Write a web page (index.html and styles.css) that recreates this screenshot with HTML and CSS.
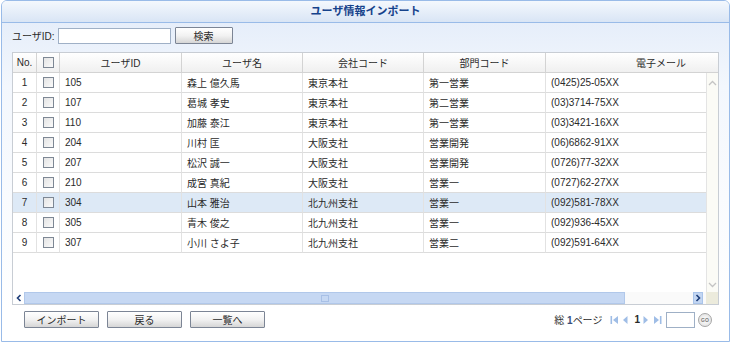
FILE: index.html
```html
<!DOCTYPE html>
<html lang="ja">
<head>
    <meta charset="UTF-8">
    <title>ユーザ情報インポート</title>
    <link rel="stylesheet" href="styles.css">
</head>
<body>

<div class="panel">
    <div class="panel-title">ユーザ情報インポート</div>
    <div class="panel-body">
        <!-- Search -->
        <div class="search-bar">
            <label for="userId">ユーザID:</label>
            <input type="text" id="userId" class="text-input">
            <button type="button" class="btn btn-search">検索</button>
        </div>

        <!-- Grid -->
        <div class="grid">
            <div class="grid-header">
                <table class="grid-table">
                    <colgroup>
                        <col class="c-no"><col class="c-chk"><col class="c-id"><col class="c-name">
                        <col class="c-comp"><col class="c-dept"><col class="c-mail">
                    </colgroup>
                    <tr>
                        <th>No.</th>
                        <th><span class="chk"></span></th>
                        <th>ユーザID</th>
                        <th>ユーザ名</th>
                        <th>会社コード</th>
                        <th>部門コード</th>
                        <th>電子メール</th>
                    </tr>
                </table>
            </div>
            <div class="grid-main">
                <div class="grid-rows">
                    <table class="grid-table">
                        <colgroup>
                            <col class="c-no"><col class="c-chk"><col class="c-id"><col class="c-name">
                            <col class="c-comp"><col class="c-dept"><col class="c-mail">
                        </colgroup>
                        <tr><td class="num">1</td><td class="cb"><span class="chk"></span></td><td>105</td><td>森上 億久馬</td><td>東京本社</td><td>第一営業</td><td>(0425)25-05XX</td></tr>
                        <tr><td class="num">2</td><td class="cb"><span class="chk"></span></td><td>107</td><td>葛城 孝史</td><td>東京本社</td><td>第二営業</td><td>(03)3714-75XX</td></tr>
                        <tr><td class="num">3</td><td class="cb"><span class="chk"></span></td><td>110</td><td>加藤 泰江</td><td>東京本社</td><td>第一営業</td><td>(03)3421-16XX</td></tr>
                        <tr><td class="num">4</td><td class="cb"><span class="chk"></span></td><td>204</td><td>川村 匡</td><td>大阪支社</td><td>営業開発</td><td>(06)6862-91XX</td></tr>
                        <tr><td class="num">5</td><td class="cb"><span class="chk"></span></td><td>207</td><td>松沢 誠一</td><td>大阪支社</td><td>営業開発</td><td>(0726)77-32XX</td></tr>
                        <tr><td class="num">6</td><td class="cb"><span class="chk"></span></td><td>210</td><td>成宮 真紀</td><td>大阪支社</td><td>営業一</td><td>(0727)62-27XX</td></tr>
                        <tr class="selected"><td class="num">7</td><td class="cb"><span class="chk"></span></td><td>304</td><td>山本 雅治</td><td>北九州支社</td><td>営業一</td><td>(092)581-78XX</td></tr>
                        <tr><td class="num">8</td><td class="cb"><span class="chk"></span></td><td>305</td><td>青木 俊之</td><td>北九州支社</td><td>営業一</td><td>(092)936-45XX</td></tr>
                        <tr><td class="num">9</td><td class="cb"><span class="chk"></span></td><td>307</td><td>小川 さよ子</td><td>北九州支社</td><td>営業二</td><td>(092)591-64XX</td></tr>
                    </table>
                </div>
                <div class="vscroll">
                    <span class="sb-arrow">
                        <svg width="9" height="6" viewBox="0 0 9 6"><path d="M1 5 L4.5 1.5 L8 5" fill="none" stroke="#c4c4c4" stroke-width="1.3"/></svg>
                    </span>
                    <span class="sb-arrow">
                        <svg width="9" height="6" viewBox="0 0 9 6"><path d="M1 1 L4.5 4.5 L8 1" fill="none" stroke="#c4c4c4" stroke-width="1.3"/></svg>
                    </span>
                </div>
            </div>
            <div class="grid-foot">
                <div class="hscroll">
                    <span class="sb-left">
                        <svg width="6" height="8" viewBox="0 0 6 8"><path d="M4.5 1 L1.5 4 L4.5 7" fill="none" stroke="#1f3f7a" stroke-width="1.6"/></svg>
                    </span>
                    <span class="sb-thumb"><span class="grip"></span></span>
                    <span class="sb-track"></span>
                    <span class="sb-right">
                        <svg width="6" height="8" viewBox="0 0 6 8"><path d="M1.5 1 L4.5 4 L1.5 7" fill="none" stroke="#1f3f7a" stroke-width="1.6"/></svg>
                    </span>
                </div>
                <div class="corner"></div>
            </div>
        </div>

        <!-- Buttons and paging -->
        <div class="bottom-bar">
            <div class="button-group">
                <button type="button" class="btn">インポート</button>
                <button type="button" class="btn">戻る</button>
                <button type="button" class="btn">一覧へ</button>
            </div>
            <div class="pager">
                <span class="pager-total">総 <b>1</b>ページ</span>
                <svg class="pg-icon" width="9" height="10" viewBox="0 0 9 10"><rect x="0.5" y="1" width="1.6" height="8" fill="#9fbde6"/><path d="M8 1 L3 5 L8 9 Z" fill="#9fbde6"/></svg>
                <svg class="pg-icon" width="6" height="10" viewBox="0 0 6 10"><path d="M5.5 1 L1 5 L5.5 9 Z" fill="#9fbde6"/></svg>
                <b class="pg-num">1</b>
                <svg class="pg-icon next" width="6" height="10" viewBox="0 0 6 10"><path d="M0.5 1 L5 5 L0.5 9 Z" fill="#9fbde6"/></svg>
                <svg class="pg-icon" width="9" height="10" viewBox="0 0 9 10"><path d="M1 1 L6 5 L1 9 Z" fill="#9fbde6"/><rect x="6.9" y="1" width="1.6" height="8" fill="#9fbde6"/></svg>
                <input type="text" class="page-input">
                <span class="go-btn">GO</span>
            </div>
        </div>
    </div>
</div>

</body>
</html>
```

FILE: styles.css
```css
body {
    margin: 0;
    font-family: "Liberation Sans", "Noto Sans CJK JP", sans-serif;
    font-size: 10px;
    color: #2a2a2a;
    background: #fff;
}
.panel {
    width: 727px;
    height: 340px;
    margin-left: 1px;
    border: 1px solid #99bbe8;
    border-radius: 6px 6px 0 0;
    overflow: hidden;
}
.panel-title {
    height: 21px;
    line-height: 21px;
    text-align: center;
    font-size: 11px;
    font-weight: bold;
    color: #15428b;
    background: linear-gradient(#f4f8fd, #d9e5f5);
    border-bottom: 1px solid #99bbe8;
}
.panel-body {
    height: 318px;
    padding: 0 10px;
    background: linear-gradient(#e6eefa, #f3f7fd 20%, #ffffff 90%);
}
.search-bar {
    display: flex;
    align-items: center;
    height: 17px;
    padding-top: 4px;
}
.search-bar label {
    margin-right: 3px;
}
.text-input {
    width: 113px;
    height: 16px;
    margin: 0;
    padding: 0 2px;
    border: 1px solid #9fb0c6;
    box-sizing: border-box;
    background: #fff;
}
.btn {
    height: 17px;
    padding: 0;
    margin: 0;
    font-family: inherit;
    font-size: 10px;
    color: #2a2a2a;
    border: 1px solid #7c8595;
    border-radius: 1px;
    background: linear-gradient(#ffffff, #f2f2f2 50%, #d6d6d6);
    box-sizing: border-box;
}
.btn-search {
    width: 58px;
    margin-left: 4px;
}

/* grid */
.grid {
    margin-top: 8px;
    border: 1px solid #c8cdd4;
    background: #fff;
}
.grid-header {
    height: 20px;
    overflow: hidden;
}
.grid-table {
    table-layout: fixed;
    border-collapse: separate;
    border-spacing: 0;
    width: 764px;
}
.c-no { width: 24px; }
.c-chk { width: 23px; }
.c-id { width: 122px; }
.c-name { width: 121px; }
.c-comp { width: 121px; }
.c-dept { width: 122px; }
.c-mail { width: 231px; }
.grid-table th {
    height: 19px;
    padding: 0;
    font-weight: normal;
    text-align: center;
    background: linear-gradient(#ffffff, #f0f0f0);
    border-right: 1px solid #d3d3d3;
    border-bottom: 1px solid #d3d3d3;
}
.grid-table td {
    height: 19px;
    padding: 0 0 0 5px;
    white-space: nowrap;
    border-right: 1px solid #e2e2e2;
    border-bottom: 1px solid #dcdcdc;
}
.grid-table td.num {
    padding: 0;
    text-align: center;
}
.grid-table td.cb {
    padding: 0;
    text-align: center;
}
.selected td {
    background: #dde9f6;
}
.chk {
    display: inline-block;
    width: 9px;
    height: 9px;
    vertical-align: middle;
    border: 1px solid #7d8794;
    background: linear-gradient(135deg, #e4e4e4, #fafafa);
}
.grid-main {
    display: flex;
    height: 219px;
}
.grid-rows {
    flex: 1;
    overflow: hidden;
}
.vscroll {
    width: 11px;
    display: flex;
    flex-direction: column;
    justify-content: space-between;
    padding: 3px 0 1px;
    border-left: 1px solid #e4e4e4;
    background: #fbfbf6;
}
.sb-arrow {
    display: flex;
    justify-content: center;
    align-items: center;
    height: 13px;
}
.grid-foot {
    display: flex;
    height: 12px;
}
.hscroll {
    flex: 1;
    display: flex;
    background: #fafafa;
}
.sb-left, .sb-right {
    width: 11px;
    display: flex;
    justify-content: center;
    align-items: center;
}
.sb-left {
    background: #fff;
}
.sb-right {
    width: 10px;
    margin-right: 3px;
    background: #c3d6f2;
    border: 1px solid #a9c4ea;
    box-sizing: border-box;
}
.sb-thumb {
    width: 601px;
    display: flex;
    justify-content: center;
    align-items: center;
    background: #c6d8f3;
    border: 1px solid #b1c8ea;
    box-sizing: border-box;
}
.grip {
    width: 6px;
    height: 5px;
    border: 1px solid #a8c0e6;
}
.sb-track {
    flex: 1;
}
.corner {
    width: 12px;
    background: #ecebdc;
}

/* bottom */
.bottom-bar {
    display: flex;
    justify-content: space-between;
    align-items: center;
    margin-top: 5px;
    padding: 0 7px 0 12px;
}
.button-group {
    display: flex;
    gap: 8px;
}
.button-group .btn {
    width: 75px;
}
.pager {
    display: flex;
    align-items: center;
    height: 19px;
}
.pager-total {
    margin-right: 8px;
}
.pager-total b {
    color: #3a4f7a;
}
.pg-icon {
    margin-right: 3px;
}
.pg-num {
    margin: 0 3px 0 3px;
}
.pg-icon.next {
    margin-right: 4px;
}
.page-input {
    width: 29px;
    height: 16px;
    margin: 0 3px 0 1px;
    padding: 0;
    border: 1px solid #9fb0c6;
    box-sizing: border-box;
}
.go-btn {
    width: 14px;
    height: 14px;
    border-radius: 50%;
    border: 1px solid #a6a6a6;
    box-sizing: border-box;
    background: radial-gradient(#ffffff, #dcdcdc);
    font-size: 5px;
    font-weight: bold;
    color: #777;
    text-align: center;
    line-height: 12px;
}
```
